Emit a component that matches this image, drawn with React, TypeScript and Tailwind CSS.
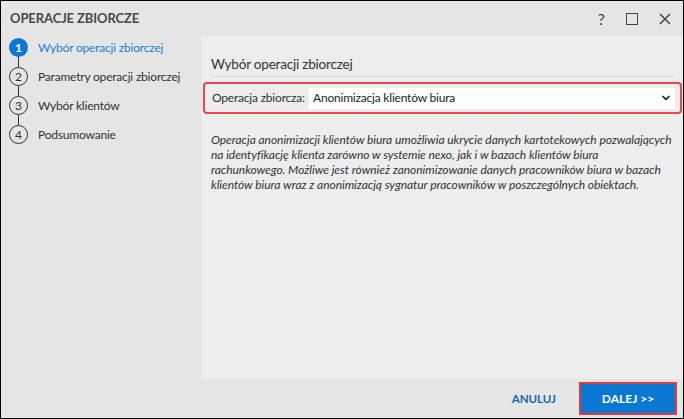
import { ChevronDown } from "lucide-react";

const steps = [
  "Wybór operacji zbiorczej",
  "Parametry operacji zbiorczej",
  "Wybór klientów",
  "Podsumowanie",
];

const font = { fontFamily: 'Lato, "Noto Sans", sans-serif' };

const App = () => {
  return (
    <div
      className="w-[684px] h-[419px] border border-black bg-[#e5e5e5] flex flex-col text-[#333]"
      style={font}
    >
      {/* title bar */}
      <div className="h-[35px] flex items-center pl-[9px] pr-[10px]">
        <h1 className="text-[13px] font-bold text-[#484848] tracking-[-0.1px]">
          OPERACJE ZBIORCZE
        </h1>
        <div className="ml-auto flex items-center text-[#444]">
          <span className="text-[16px] leading-none mr-[21px]">?</span>
          <span className="w-[12px] h-[12px] border-[1.5px] border-[#444] mr-[21px]" />
          <svg width="12" height="12" viewBox="0 0 12 12" className="mr-[2px]">
            <path d="M1 1 L11 11 M11 1 L1 11" stroke="#444" strokeWidth="1.5" />
          </svg>
        </div>
      </div>

      <div className="flex flex-1 min-h-0">
        {/* steps */}
        <div className="w-[201px] shrink-0 pt-[2px] pl-[8px]">
          {steps.map((s, i) => (
            <div key={s} className="flex items-start">
              <div className="flex flex-col items-center w-[19px]">
                <div
                  className={`w-[19px] h-[19px] rounded-full flex items-center justify-center text-[12px] leading-none ${
                    i === 0
                      ? "bg-[#0c78d4] text-white font-bold"
                      : "border-[1.5px] border-[#333] text-[#333]"
                  }`}
                >
                  {i + 1}
                </div>
                {i < steps.length - 1 && (
                  <div className="w-[1.5px] h-[10px] bg-[#333]" />
                )}
              </div>
              <span
                className={`ml-[10px] text-[12px] leading-[19px] tracking-[-0.2px] whitespace-nowrap ${
                  i === 0 ? "text-[#1a7fd4]" : "text-[#333]"
                }`}
              >
                {s}
              </span>
            </div>
          ))}
        </div>

        {/* content */}
        <div className="flex-1 min-w-0 bg-[#ededed] pt-[18px]">
          <div className="mx-[9px] mr-[8px] border-b border-[#d6d6d6] pb-[2px]">
            <h2 className="text-[13.5px] leading-[20px] tracking-[-0.2px] text-[#333]">
              Wybór operacji zbiorczej
            </h2>
          </div>
          <div className="ml-[1px] mr-[1px] mt-[5px] h-[32px] border-2 border-[#e8474b] rounded-[4px] flex items-center pl-[7px] pr-[5px]">
            <span className="text-[12px] tracking-[-0.2px] text-[#333] w-[97px] shrink-0 whitespace-nowrap">
              Operacja zbiorcza:
            </span>
            <div className="flex-1 h-[21px] bg-white flex items-center pl-[4px] pr-[3px]">
              <span className="text-[12px] tracking-[-0.2px] text-[#222]">
                Anonimizacja klientów biura
              </span>
              <ChevronDown className="ml-auto w-[12px] h-[12px] text-[#222]" strokeWidth={3.5} />
            </div>
          </div>
          <p className="mx-[9px] mt-[18px] text-[12px] leading-[15px] tracking-[-0.05px] italic text-[#333] whitespace-nowrap">
            Operacja anonimizacji klientów biura umożliwia ukrycie danych kartotekowych pozwalających
            <br />
            na identyfikację klienta zarówno w systemie nexo, jak i w bazach klientów biura
            <br />
            rachunkowego. Możliwe jest również zanonimizowanie danych pracowników biura w bazach
            <br />
            klientów biura wraz z anonimizacją sygnatur pracowników w poszczególnych obiektach.
          </p>
        </div>
      </div>

      {/* footer */}
      <div className="h-[39px] flex items-center justify-end pr-[6px]">
        <button className="text-[11.5px] font-bold text-[#1767b0] mr-[23px]">ANULUJ</button>
        <div className="w-[98px] h-[33px] border-2 border-[#e03a3e] bg-[#0a78d2] flex items-center justify-center">
          <span className="text-[12px] font-bold text-white">DALEJ &gt;&gt;</span>
        </div>
      </div>
    </div>
  );
};

export default App;
